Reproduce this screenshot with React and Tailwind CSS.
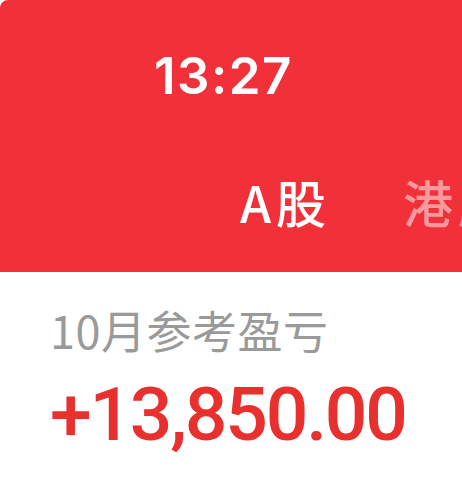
export default function App() {
  return (
    <div className="w-[462px] h-[477px] bg-white overflow-hidden">
      {/* red header */}
      <div className="h-[272px] bg-[#f2303a] rounded-tl-[8px] flex flex-col">
        <div className="pt-[44px] pl-[154px] h-[165px]">
          <span
            className="text-white text-[51px] leading-[64px] font-semibold tracking-[1.5px]"
            style={{ fontFamily: 'Inter, "Noto Sans", sans-serif' }}
          >
            13:27
          </span>
        </div>
        <div
          className="flex items-center gap-[72px] pl-[240px] whitespace-nowrap text-[50px] leading-[72px] font-medium tracking-[5px]"
          style={{ fontFamily: '"Noto Sans CJK SC", "Noto Sans", sans-serif' }}
        >
          <span className="text-white">A股</span>
          <span className="text-white/50">港股</span>
        </div>
      </div>

      {/* monthly profit */}
      <div className="pl-[50px] pt-[30px]">
        <div
          className="text-[#9a9a9a] text-[45px] leading-[56px] tracking-[0.5px]"
          style={{ fontFamily: '"Noto Sans CJK SC", "Noto Sans", sans-serif' }}
        >
          10月参考盈亏
        </div>
        <div
          className="mt-[12px] text-[#e8302f] text-[75px] leading-[88px] font-medium tracking-[-2.2px]"
          style={{ fontFamily: 'Roboto, "Noto Sans", sans-serif' }}
        >
          +13,850.00
        </div>
      </div>
    </div>
  );
}
